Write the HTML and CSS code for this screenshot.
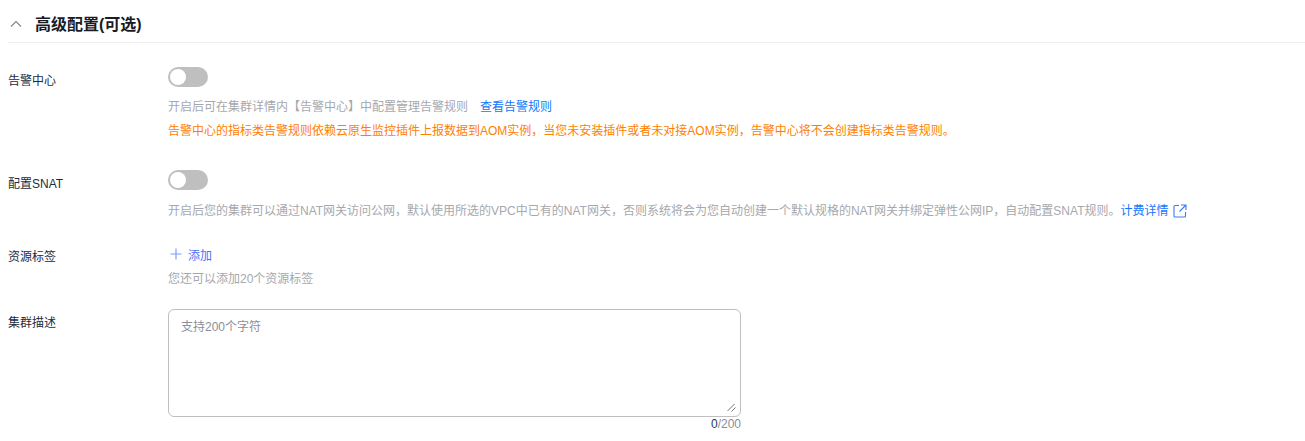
FILE: index.html
```html
<!DOCTYPE html>
<html>
<head>
    <meta charset="UTF-8">
    <title>高级配置</title>
    <link rel="stylesheet" href="styles.css">
</head>
<body>
<div class="config-section">
    <div class="section-header">
        <svg class="collapse-icon" width="12" height="12" viewBox="0 0 12 12"><path d="M1 8.500 L6 3.500 L11 8.500" fill="none" stroke="#7d8694" stroke-width="1.100"/></svg>
        <h2 class="section-title">高级配置(可选)</h2>
    </div>

    <div class="form-row row-alarm">
        <div class="form-label">告警中心</div>
        <div class="form-control">
            <div class="switch"><span class="switch-knob"></span></div>
            <p class="hint hint-first">开启后可在集群详情内【告警中心】中配置管理告警规则<a class="link link-gap">查看告警规则</a></p>
            <p class="warn">告警中心的指标类告警规则依赖云原生监控插件上报数据到AOM实例，当您未安装插件或者未对接AOM实例，告警中心将不会创建指标类告警规则。</p>
        </div>
    </div>

    <div class="form-row row-snat">
        <div class="form-label">配置SNAT</div>
        <div class="form-control">
            <div class="switch"><span class="switch-knob"></span></div>
            <p class="hint hint-snat">开启后您的集群可以通过NAT网关访问公网，默认使用所选的VPC中已有的NAT网关，否则系统将会为您自动创建一个默认规格的NAT网关并绑定弹性公网IP，自动配置SNAT规则。<a class="link">计费详情<svg class="external-icon" width="14" height="14" viewBox="0 0 14 14"><path d="M6 1.500 H2 a1 1 0 0 0 -1 1 V12 a1 1 0 0 0 1 1 H11.500 a1 1 0 0 0 1 -1 V8 M8 1 H13 V6 M13 1 L6.500 7.500" fill="none" stroke="#3a7df0" stroke-width="1.100"/></svg></a></p>
        </div>
    </div>

    <div class="form-row row-tags">
        <div class="form-label">资源标签</div>
        <div class="form-control">
            <a class="add-link"><svg class="plus-icon" width="12" height="12" viewBox="0 0 12 12"><path d="M6 0.500 V11.500 M0.500 6 H11.500" fill="none" stroke="#7f9bff" stroke-width="1.200"/></svg>添加</a>
            <p class="hint hint-tags">您还可以添加20个资源标签</p>
        </div>
    </div>

    <div class="form-row row-desc">
        <div class="form-label">集群描述</div>
        <div class="form-control">
            <div class="textarea-box">
                <div class="textarea-wrap">
                    <textarea class="desc-input" placeholder="支持200个字符"></textarea>
                    <svg class="resize-handle" width="9" height="9" viewBox="0 0 9 9"><path d="M0.500 8 L7.500 1 M4.500 8.500 L8.500 4.500" fill="none" stroke="#777" stroke-width="1"/></svg>
                </div>
                <div class="counter"><span class="counter-now">0</span>/200</div>
            </div>
        </div>
    </div>
</div>
</body>
</html>
```

FILE: styles.css
```css
* {
    box-sizing: border-box;
}

html, body {
    overflow: hidden;
}

body {
    margin: 0;
    background: white;
    color: #252b3a;
    font-family: "Liberation Sans", "Noto Sans CJK SC", sans-serif;
    font-size: 12px;
}

p {
    margin: 0;
}

.config-section {
    padding: 0 0 0 8px;
}

.section-header {
    display: flex;
    align-items: center;
    height: 43px;
    border-bottom: 1px solid #eeeeee;
    padding-top: 3px;
}

.collapse-icon {
    margin-left: 2px;
    margin-right: 13px;
    margin-top: 3px;
}

.section-title {
    margin: 0;
    font-size: 16px;
    font-weight: bold;
    color: #191c24;
}

.form-row {
    display: flex;
}

.form-label {
    width: 160px;
    flex: none;
    line-height: 18px;
    color: #252b3a;
}

.row-alarm {
    margin-top: 24px;
}

.row-alarm .form-label {
    margin-top: 5px;
}

.row-snat {
    margin-top: 30px;
}

.row-snat .form-label {
    margin-top: 5px;
}

.row-tags {
    margin-top: 25px;
}

.row-tags .form-label {
    margin-top: 3px;
}

.row-desc {
    margin-top: 21px;
}

.row-desc .form-label {
    margin-top: 5px;
}

.switch {
    width: 40px;
    height: 20px;
    border-radius: 10px;
    background: #bfbfbf;
    padding: 2px;
}

.switch-knob {
    display: block;
    width: 16px;
    height: 16px;
    border-radius: 50%;
    background: white;
}

.hint {
    color: #a6a8ad;
    line-height: 18px;
}

.hint-first {
    margin-top: 11px;
}

.hint-snat {
    margin-top: 12px;
}

.hint-tags {
    margin-top: 7px;
}

.warn {
    margin-top: 6px;
    color: #ff8000;
    line-height: 18px;
}

.link {
    color: #1476ff;
}

.link-gap {
    margin-left: 12px;
}

.external-icon {
    margin-left: 5px;
    vertical-align: -3px;
}

.add-link {
    display: flex;
    align-items: center;
    height: 18px;
    color: #4a6ff5;
}

.plus-icon {
    margin-left: 2px;
    margin-right: 6px;
}

.textarea-box {
    width: 573px;
}

.textarea-wrap {
    position: relative;
}

.desc-input {
    display: block;
    width: 100%;
    height: 108px;
    padding: 7px 12px;
    border: 1px solid #bfbfbf;
    border-radius: 6px;
    font-family: inherit;
    font-size: 12px;
    outline: none;
    resize: none;
}

.desc-input::placeholder {
    color: #8a8e99;
    opacity: 1;
}

.resize-handle {
    position: absolute;
    right: 5px;
    bottom: 5px;
}

.counter {
    text-align: right;
    color: #8a8e99;
    line-height: 14px;
}

.counter-now {
    color: #23395d;
}
```
